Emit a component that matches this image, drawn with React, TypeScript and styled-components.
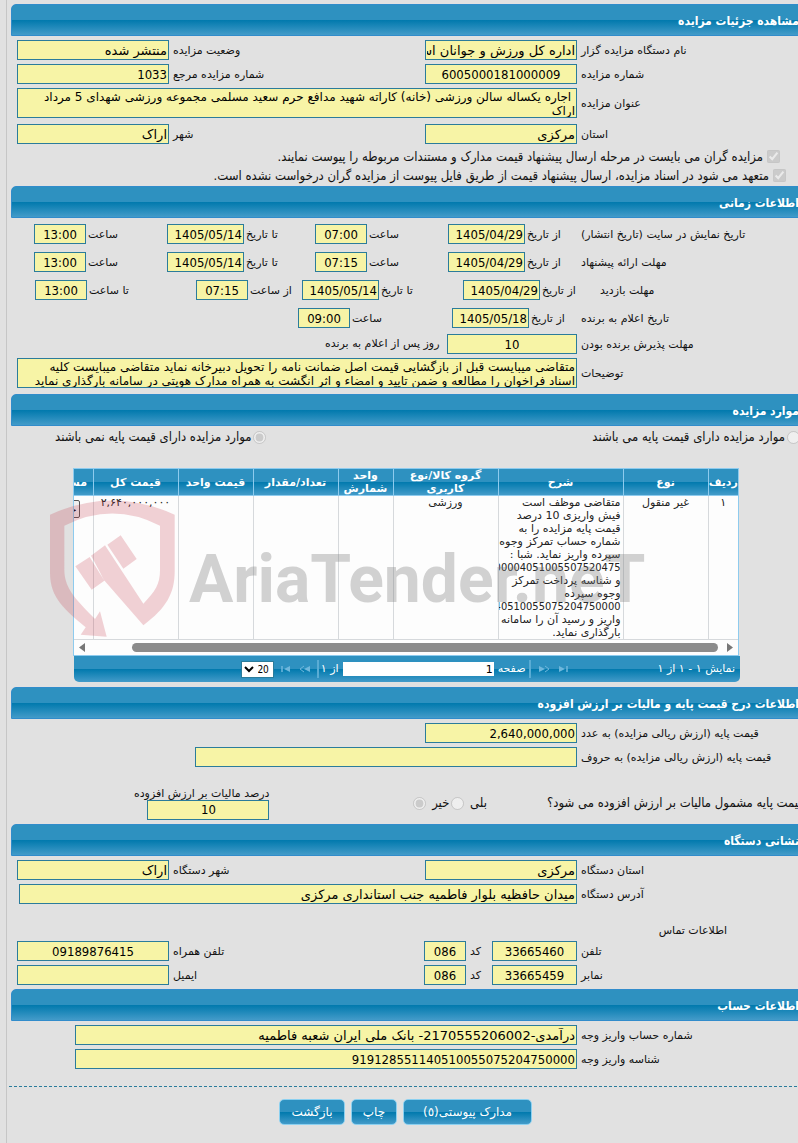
import React from "react";
import styled, { createGlobalStyle, css } from "styled-components";

const GlobalStyle = createGlobalStyle`
  *, *::before, *::after { box-sizing: border-box; }
  body {
    margin: 0;
    background: #e1e1e1;
    color: #111;
    font-family: "DejaVu Sans", Tahoma, sans-serif;
    font-size: 11px;
    line-height: 14px;
  }
  input, select, textarea, button { font-family: inherit; margin: 0; }
`;

const condensed = `"DejaVu Sans Condensed", "DejaVu Sans", sans-serif`;

const gloss = css`
  background: linear-gradient(#2e91c0 0 50%, #0079ad 50%, #439bc9 100%);
`;

const Page = styled.main`
  min-height: 100vh;
  margin-left: 6px;
  padding: 4px 0 16px 4px;
  border-left: 1px solid #c6c6c6;
  overflow-x: clip;
`;

const Bar = styled.h2`
  ${gloss}
  height: 32px;
  margin: 0 -2px 0 0;
  line-height: 32px;
  font-family: ${condensed};
  font-size: 12px;
  font-weight: bold;
  color: #fff;
  border: 1px solid #318ccb;
  border-radius: 5px 0 0 0;
  white-space: nowrap;
`;

const Rows = styled.div<{ $gap?: number; $top?: number; $bottom?: number }>`
  display: flex;
  flex-direction: column;
  gap: ${(p) => p.$gap ?? 4}px;
  padding: ${(p) => p.$top ?? 4}px 0 ${(p) => p.$bottom ?? 4}px 6px;
`;

const Row = styled.div`
  display: flex;
  align-items: center;
`;

const Field = styled.label<{ $grow?: boolean }>`
  display: flex;
  align-items: center;
  gap: 4px;
  ${(p) => p.$grow && "flex: 1; min-width: 0;"}
`;

const TimeField = styled(Field)`
  gap: 2px;
`;

const Caption = styled.span<{ $width?: number }>`
  ${(p) => (p.$width ? `flex: 0 0 ${p.$width}px;` : "flex: 1;")}
  padding-top: 2px;
  text-align: left;
  white-space: nowrap;
`;

const MAIN = 217;

const box = css`
  background: #f7f4a6;
  border: 1px solid #2b7c9b;
  border-radius: 0;
  color: #000;
  outline: none;
`;

const Box = styled.input<{ $width?: number; $center?: boolean }>`
  ${box}
  height: 20px;
  padding: 0 1px;
  font-size: 13px;
  text-align: ${(p) => (p.$center ? "center" : "right")};
  ${(p) => (p.$width ? `flex: 0 0 ${p.$width}px; width: ${p.$width}px;` : "flex: 1; min-width: 0;")}
  &[dir="ltr"] { font-family: ${condensed}; }
`;

const Area = styled.textarea`
  ${box}
  flex: 1;
  min-width: 0;
  height: 30px;
  padding: 1px 1px 0;
  font-size: 12px;
  line-height: 14px;
  resize: none;
  overflow: hidden;
`;

const Check = styled.label`
  display: flex;
  align-items: center;
  gap: 4px;
  height: 19px;
  font-family: ${condensed};
  font-size: 13px;
  white-space: nowrap;
  input { width: 13px; height: 13px; }
`;

const Checks = styled.div`
  padding: 0 18px 0 0;
  & > :nth-child(2) { margin-right: -6px; }
`;

const BaseChoice = styled.div`
  display: flex;
  justify-content: space-between;
  height: 42px;
  padding: 0 0 0 44px;
  margin-right: -2px;
`;

const Choice = styled.label`
  display: flex;
  align-items: center;
  gap: 2px;
  height: 22px;
  font-family: ${condensed};
  font-size: 13px;
  white-space: nowrap;
  input { width: 13px; height: 13px; }
`;

const Gap = styled.span<{ $width: number }>`
  flex: 0 1 ${(p) => p.$width}px;
`;

const GridHolder = styled.div`
  position: relative;
  margin: 0 59px 5px 62px;
`;

const GridView = styled.div`
  overflow: hidden;
  background: #fdfdfd;
  border: 1px solid #8ecbee;
`;

const Table = styled.table`
  width: 705px;
  table-layout: fixed;
  border-collapse: collapse;
  color: #222;
`;

const Th = styled.th`
  ${gloss}
  height: 26px;
  padding: 0;
  border-left: 1px solid #8ecbee;
  border-bottom: 1px solid #8ecbee;
  color: #fff;
  font-size: 11px;
  line-height: 13px;
  overflow: hidden;
`;

const Td = styled.td<{ $text?: boolean }>`
  height: 143px;
  padding: 0 2px;
  vertical-align: top;
  text-align: ${(p) => (p.$text ? "right" : "center")};
  border-left: 1px solid #d6d9dc;
  border-bottom: 1px solid #d6d9dc;
  font-size: 11px;
  line-height: 13px;
  white-space: nowrap;
  overflow: hidden;
`;

const Line = styled.span<{ $digits?: boolean }>`
  display: block;
  ${(p) => p.$digits && `font-family: ${condensed};`}
`;

const CellButton = styled.button`
  display: block;
  height: 18px;
  margin-top: 4px;
  margin-right: 11px;
  padding: 0 2px;
  font-size: 11px;
  background: #efefef;
  border: 1px solid #555;
  border-radius: 2px;
`;

const Scroll = styled.div`
  display: flex;
  align-items: center;
  height: 15px;
  padding: 0 5px;
  gap: 9px;
`;

const Thumb = styled.div`
  flex: 1;
  height: 9px;
  border-radius: 5px;
  background: #8b8b8b;
  margin-left: 38px;
`;

const Pager = styled.div`
  ${gloss}
  display: flex;
  align-items: center;
  height: 26px;
  padding: 0 5px;
  margin: 0 -1px 0 1px;
  border-radius: 0 0 5px 5px;
  color: #fff;
  white-space: nowrap;
  label { display: flex; align-items: center; gap: 4px; }
`;

const PageInput = styled.input`
  width: 151px;
  height: 14px;
  padding: 0 1px;
  border: 0;
  font-size: 11px;
  background: #fff;
  text-align: right;
`;

const PageSize = styled.select`
  width: 33px;
  height: 17px;
  padding: 0;
  border: 1px solid #2b7c9b;
  background: #fff;
  color: #000;
  font-family: ${condensed};
  font-size: 10px;
`;

const Divider = styled.span`
  width: 2px;
  height: 18px;
  background: #5aacd4;
`;

const Nav = styled.button`
  display: flex;
  width: 20px;
  height: 16px;
  padding: 0;
  border: 0;
  background: none;
  align-items: center;
  justify-content: center;
`;

const Mark = styled.svg`
  position: absolute;
  left: -23px;
  top: 30px;
  width: 610px;
  height: 142px;
  overflow: visible;
  pointer-events: none;
`;

const VatRow = styled.div`
  display: flex;
  align-items: center;
  height: 57px;
  margin-right: -6px;
  padding-top: 15px;
  font-family: ${condensed};
  font-size: 13px;
  white-space: nowrap;
`;

const VatField = styled.label`
  display: flex;
  flex-direction: column;
  align-items: flex-start;
  margin-top: 1px;
  line-height: 12px;
  font-family: "DejaVu Sans", sans-serif;
  font-size: 11px;
  input { flex: none; width: 122px; }
`;

const SubTitle = styled.h3`
  margin: 20px 71px 0 0;
  line-height: 13px;
  font-size: 11px;
  font-weight: normal;
`;

const Actions = styled.footer`
  display: flex;
  justify-content: center;
  gap: 6px;
  margin: 13px -4px 0 -2px;
  padding-top: 12px;
  border-top: 1px dashed #2b7c9b;
`;

const Action = styled.button<{ $width: number }>`
  ${gloss}
  width: ${(p) => p.$width}px;
  height: 26px;
  padding: 0;
  border: 1px solid #8bd0f0;
  border-radius: 5px;
  color: #fff;
  font-size: 12px;
`;

const isNumeric = (v: string) => /^[\d,]+$/.test(v);

function Entry({ label, value, width, lead = MAIN, center, grow }: {
  label: string; value: string; width?: number; lead?: number | null; center?: boolean; grow?: boolean;
}) {
  return (
    <Field $grow={grow}>
      <Caption $width={lead ?? undefined}>{label}</Caption>
      <Box readOnly value={value} $width={width} $center={center} dir={isNumeric(value) ? "ltr" : "rtl"} />
    </Field>
  );
}

function Stamp({ label, value, lead }: { label: string; value: string; lead: number }) {
  return (
    <TimeField>
      <Caption $width={lead}>{label}</Caption>
      <Box readOnly value={value} dir="ltr" $width={value.length > 5 ? 77 : 52} $center={value.length < 6} />
    </TimeField>
  );
}

type StampRow = { title: string; width: number; stamps: [string, string, number][] };

const schedule: StampRow[] = [
  {
    title: "تاریخ نمایش در سایت (تاریخ انتشار)", width: MAIN,
    stamps: [["از تاریخ", "1405/04/29", 54], ["ساعت", "07:00", 79], ["تا تاریخ", "1405/05/14", 69], ["ساعت", "13:00", 79]],
  },
  {
    title: "مهلت ارائه پیشنهاد", width: MAIN,
    stamps: [["از تاریخ", "1405/04/29", 54], ["ساعت", "07:15", 79], ["تا تاریخ", "1405/05/14", 69], ["ساعت", "13:00", 79]],
  },
  {
    title: "مهلت بازدید", width: 198,
    stamps: [["از تاریخ", "1405/04/29", 58], ["تا تاریخ", "1405/05/14", 82], ["از ساعت", "07:15", 52], ["تا ساعت", "13:00", 107]],
  },
  {
    title: "تاریخ اعلام به برنده", width: MAIN,
    stamps: [["از تاریخ", "1405/05/18", 50], ["ساعت", "09:00", 100]],
  },
];

const columns: [string, number][] = [
  ["ردیف", 30], ["نوع", 85], ["شرح", 125], ["گروه کالا/نوع کاربری", 105], ["واحد شمارش", 55],
  ["تعداد/مقدار", 85], ["قیمت واحد", 75], ["قیمت کل", 85], ["مستندات", 60],
];

const description = [
  "متقاضی موظف است", "فیش واریزی 10 درصد", "قیمت پایه مزایده را به", "شماره حساب تمرکز وجوه",
  "سپرده واریز نماید. شبا :", "100004051005507520475", "و شناسه پرداخت تمرکز", "وجوه سپرده",
  "140510055075204750000", "واریز  و رسید آن را سامانه", "بارگذاری نماید.",
];

function Watermark() {
  return (
    <Mark viewBox="0 0 610 142" aria-hidden="true">
      <g transform="scale(.3334) translate(-150 -325)" fill="#c63246" fillOpacity=".22">
        <path
          fillRule="evenodd"
          d="M150 375Q337 290 524 375V545C524 610 500 655 430 707L315 575C310 570 300 545 273 498L315 467L365 543L430 642C465 605 480 585 480 540V408Q337 335 193 408V540C193 600 235 635 285 688L300 665L320 741L242 735L257 713C195 660 150 625 150 550Z"
        />
        <path d="M322 465L362 437L410 508L370 537ZM226 530L269 502L313 573L275 600Z" />
      </g>
      <text x="139" y="104" direction="ltr" fontFamily="Roboto, sans-serif" fontWeight="bold" fontSize="66" fill="#777" fillOpacity=".32">
        AriaTender.neT
      </text>
    </Mark>
  );
}

function NavIcon({ kind }: { kind: "first" | "prev" | "next" | "last" }) {
  const flip = kind === "next" || kind === "last";
  const edge = kind === "first" || kind === "last";
  return (
    <svg width="10" height="8" viewBox="0 0 10 8" transform={flip ? undefined : "scale(-1 1)"}>
      <path d="M0 1L6 4L0 7Z" fill="#6fb7dc" />
      {edge ? <path d="M8 1V7" stroke="#6fb7dc" strokeWidth="1.5" /> : <path d="M6 1L10 4L6 7" stroke="#6fb7dc" fill="none" />}
    </svg>
  );
}

function ItemsGrid() {
  return (
    <GridHolder>
      <GridView>
        <Table>
          <colgroup>{columns.map(([name, w]) => <col key={name} width={w} />)}</colgroup>
          <thead>
            <tr>{columns.map(([name]) => <Th key={name} scope="col">{name}</Th>)}</tr>
          </thead>
          <tbody>
            <tr>
              <Td>۱</Td>
              <Td>غیر منقول</Td>
              <Td $text>{description.map((line) => <Line key={line} $digits={isNumeric(line)}>{line}</Line>)}</Td>
              <Td>ورزشی</Td>
              <Td />
              <Td />
              <Td />
              <Td>۲,۶۴۰,۰۰۰,۰۰۰</Td>
              <Td $text><CellButton type="button">جزئیات</CellButton></Td>
            </tr>
          </tbody>
        </Table>
        <Scroll>
          <svg width="6" height="9"><path d="M0 0L6 4.5L0 9Z" fill="#777" /></svg>
          <Thumb />
          <svg width="6" height="9"><path d="M6 0L0 4.5L6 9Z" fill="#777" /></svg>
        </Scroll>
      </GridView>
      <Pager>
        <span>نمایش ۱ - ۱ از ۱</span>
        <Gap $width={84} />
        <Nav type="button" aria-label="صفحه آخر"><NavIcon kind="last" /></Nav>
        <Nav type="button" aria-label="صفحه بعد"><NavIcon kind="next" /></Nav>
        <Gap $width={3} />
        <Divider />
        <Gap $width={3} />
        <label>صفحه <PageInput readOnly value="1" dir="ltr" /></label>
        <Gap $width={4} />
        <span>از ۱</span>
        <Gap $width={2} />
        <Divider />
        <Gap $width={2} />
        <Nav type="button" aria-label="صفحه قبل"><NavIcon kind="prev" /></Nav>
        <Nav type="button" aria-label="صفحه اول"><NavIcon kind="first" /></Nav>
        <Gap $width={1} />
        <PageSize aria-label="تعداد در صفحه" defaultValue="20"><option>20</option><option>50</option></PageSize>
      </Pager>
      <Watermark />
    </GridHolder>
  );
}

export default function App() {
  return (
    <Page dir="rtl" lang="fa">
      <GlobalStyle />
      <Bar>مشاهده جزئیات مزایده</Bar>
      <Rows $bottom={0}>
        <Row>
          <Entry label="نام دستگاه مزایده گزار" value="اداره کل ورزش و جوانان استان مرکزی" width={152} />
          <Entry grow lead={null} label="وضعیت مزایده" value="منتشر شده" width={152} />
        </Row>
        <Row>
          <Entry label="شماره مزایده" value="6005000181000009" width={152} center />
          <Entry grow lead={null} label="شماره مزایده مرجع" value="1033" width={152} />
        </Row>
        <Field>
          <Caption $width={MAIN}>عنوان مزایده</Caption>
          <Area readOnly value={" اجاره یکساله سالن ورزشی (خانه) کاراته شهید مدافع حرم سعید مسلمی مجموعه ورزشی شهدای 5 مرداد\nاراک"} />
        </Field>
      </Rows>
      <Rows $top={6} $bottom={3}>
        <Row>
          <Entry label="استان" value="مرکزی" width={152} />
          <Entry grow lead={null} label="شهر" value="اراک" width={152} />
        </Row>
      </Rows>
      <Checks>
        <Check><input type="checkbox" checked disabled readOnly />مزایده گران می بایست در مرحله ارسال پیشنهاد قیمت مدارک و مستندات مربوطه را پیوست نمایند.</Check>
        <Check><input type="checkbox" checked disabled readOnly />متعهد می شود در اسناد مزایده، ارسال پیشنهاد قیمت از طریق فایل پیوست از مزایده گران درخواست نشده است.</Check>
      </Checks>
      <Rows $top={1} $bottom={0} />

      <Bar>اطلاعات زمانی</Bar>
      <Rows $gap={8} $top={6} $bottom={2}>
        {schedule.map((row) => (
          <Row key={row.title}>
            <Caption $width={row.width}>{row.title}</Caption>
            {row.stamps.map(([label, value, lead], i) => <Stamp key={i} label={label} value={value} lead={lead} />)}
          </Row>
        ))}
      </Rows>
      <Rows $bottom={6}>
        <Field>
          <Caption $width={MAIN}>مهلت پذیرش برنده بودن</Caption>
          <Box readOnly value="10" dir="ltr" $width={130} $center />
          <span>&nbsp;روز پس از اعلام به برنده</span>
        </Field>
        <Field>
          <Caption $width={MAIN}>توضیحات</Caption>
          <Area readOnly value={"متقاضی میبایست قبل از بازگشایی قیمت اصل ضمانت نامه را تحویل دبیرخانه نماید متقاضی میبایست کلیه\nاسناد فراخوان را مطالعه و ضمن تایید و امضاء و اثر انگشت به همراه مدارک هویتی در سامانه بارگذاری نماید"} />
        </Field>
      </Rows>

      <Bar>موارد مزایده</Bar>
      <BaseChoice>
        <Choice><input type="radio" name="base" disabled />موارد مزایده دارای قیمت پایه می باشند</Choice>
        <Choice><input type="radio" name="base" defaultChecked disabled />موارد مزایده دارای قیمت پایه نمی باشند</Choice>
      </BaseChoice>
      <ItemsGrid />

      <Bar>اطلاعات درج قیمت پایه و مالیات بر ارزش افزوده</Bar>
      <Rows $bottom={0}>
        <Entry label="قیمت پایه (ارزش ریالی مزایده) به عدد" value="2,640,000,000" width={152} />
        <Entry label="قیمت پایه (ارزش ریالی مزایده) به حروف" value="" width={382} />
      </Rows>
      <VatRow>
        <span>قیمت پایه مشمول مالیات بر ارزش افزوده می شود؟</span>
        <Gap $width={60} />
        <Choice>بلی&nbsp;<input type="radio" name="vat" disabled /></Choice>
        <Gap $width={2} />
        <Choice>خیر&nbsp;<input type="radio" name="vat" defaultChecked disabled /></Choice>
        <Gap $width={144} />
        <VatField>درصد مالیات بر ارزش افزوده<Box readOnly value="10" dir="ltr" $center /></VatField>
      </VatRow>

      <Bar>نشانی دستگاه</Bar>
      <Rows $bottom={0}>
        <Row>
          <Entry label="استان دستگاه" value="مرکزی" width={152} />
          <Entry grow lead={null} label="شهر دستگاه" value="اراک" width={152} />
        </Row>
        <Entry label="آدرس دستگاه" value="میدان حافظیه بلوار فاطمیه جنب استانداری مرکزی" width={558} />
      </Rows>
      <SubTitle>اطلاعات تماس</SubTitle>
      <Rows>
        <Row>
          <Entry label="تلفن" value="33665460" width={85} center />
          <Entry lead={22} label="کد" value="086" width={42} center />
          <Entry grow lead={null} label="تلفن همراه" value="09189876415" width={152} center />
        </Row>
        <Row>
          <Entry label="نمابر" value="33665459" width={85} center />
          <Entry lead={22} label="کد" value="086" width={42} center />
          <Entry grow lead={null} label="ایمیل" value="" width={152} />
        </Row>
      </Rows>

      <Bar>اطلاعات حساب</Bar>
      <Rows>
        <Entry label="شماره حساب واریز وجه" value="درآمدی-2170555206002- بانک ملی ایران شعبه فاطمیه" width={502} />
        <Entry label="شناسه واریز وجه" value="919128551140510055075204750000" width={502} />
      </Rows>

      <Actions>
        <Action type="button" $width={129}>مدارک پیوستی(٥)</Action>
        <Action type="button" $width={46}>چاپ</Action>
        <Action type="button" $width={66}>بازگشت</Action>
      </Actions>
    </Page>
  );
}
